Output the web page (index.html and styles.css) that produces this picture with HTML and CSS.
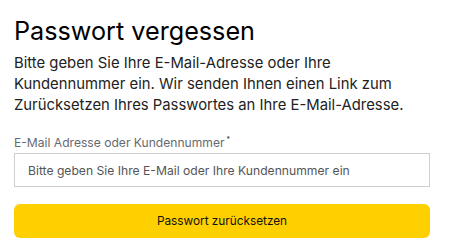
FILE: index.html
```html
<!DOCTYPE html>
<html lang="de">
<head>
<meta charset="utf-8">
<link rel="stylesheet" href="styles.css">
</head>
<body>
<main class="page">
  <h1 class="title">Passwort vergessen</h1>
  <p class="intro">Bitte geben Sie Ihre E-Mail-Adresse oder Ihre Kundennummer ein. Wir senden Ihnen einen Link zum Zurücksetzen Ihres Passwortes an Ihre E-Mail-Adresse.</p>
  <form class="form">
    <label class="label" for="email">E-Mail Adresse oder Kundennummer<sup class="req">*</sup></label>
    <input class="input" id="email" type="text" placeholder="Bitte geben Sie Ihre E-Mail oder Ihre Kundennummer ein">
    <button class="button" type="button">Passwort zurücksetzen</button>
  </form>
</main>
</body>
</html>
```
FILE: styles.css
```css
* { box-sizing: border-box; }
html, body { margin: 0; padding: 0; background: #fff; }
body { font-family: Inter, Roboto, "Liberation Sans", sans-serif; color: #111; }
.page { padding: 16px 31px 0 14px; width: 460px; }
.title { margin: 0; font-size: 25.2px; font-weight: 400; line-height: 30px; color: #000; }
.intro { margin: 7px 0 0; font-size: 14.85px; line-height: 21px; color: #222; width: 400px; }
.form { display: flex; flex-direction: column; margin-top: 19px; }
.label { font-size: 12.1px; line-height: 16px; color: #666a70; }
.req { font-size: 7px; vertical-align: top; margin-left: 2px; color: #333; position: relative; top: -3px; }
.input { margin-top: 2px; height: 34px; width: 416px; border: 1px solid #cfcfcf; padding: 0 13px; font: inherit; font-size: 12.15px; color: #333; }
.input::placeholder { color: #555; }
.button { margin-top: 17px; height: 34px; width: 416px; border: 0; border-radius: 6px; background: #ffd000; font: inherit; font-size: 11.8px; color: #111; }
```
